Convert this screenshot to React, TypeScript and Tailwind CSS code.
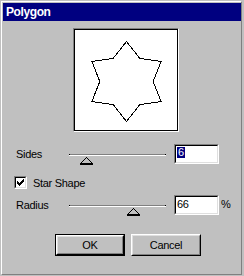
import React from "react";

function Thumb({ left }: { left: string }) {
  return (
    <svg
      className={`absolute top-[13px] ${left}`}
      width="13"
      height="8"
      viewBox="0 0 13 8"
      shapeRendering="crispEdges"
    >
      <path d="M6.5 0.5 L12.5 6.5 L0.5 6.5 Z" fill="#c0c0c0" stroke="#000" strokeWidth="1" />
      <line x1="0" y1="7" x2="13" y2="7" stroke="#000" strokeWidth="1" />
    </svg>
  );
}

function Slider({ thumbLeft }: { thumbLeft: string }) {
  return (
    <div className="relative w-[97px] h-[20px]">
      <div className="absolute left-0 right-0 top-[10px] h-[2px] border-t border-t-[#808080] border-b border-b-white" />
      <div className="absolute left-0 top-[10px] w-px h-px bg-black" />
      <div className="absolute right-0 top-[10px] w-px h-px bg-black" />
      <Thumb left={thumbLeft} />
    </div>
  );
}

function Edit({ children }: { children: React.ReactNode }) {
  return (
    <div className="w-[45px] h-[20px] border border-t-[#808080] border-l-[#808080] border-b-white border-r-white">
      <div className="w-full h-full bg-white border border-t-black border-l-black border-b-[#dfdfdf] border-r-[#dfdfdf]">
        {children}
      </div>
    </div>
  );
}

export default function App() {
  const R = 40;
  const r = 26.67;
  const cx = 51.5;
  const cy = 51.5;
  const pts: string[] = [];
  for (let k = 0; k < 6; k++) {
    const a = ((-90 + 60 * k) * Math.PI) / 180;
    const b = ((-60 + 60 * k) * Math.PI) / 180;
    pts.push(`${(cx + R * Math.cos(a)).toFixed(2)},${(cy + R * Math.sin(a)).toFixed(2)}`);
    pts.push(`${(cx + r * Math.cos(b)).toFixed(2)},${(cy + r * Math.sin(b)).toFixed(2)}`);
  }

  return (
    <div className="w-[244px] h-[276px] bg-[#c0c0c0] pt-px pl-px font-['Liberation_Sans',Arial,sans-serif] text-[11px] leading-[13px] text-black tracking-[-0.3px]">
      <div className="w-[241px] h-[274px] border border-t-white border-l-white border-r-[#808080] border-b-[#808080] pl-px pt-px flex flex-col">
        {/* Title bar */}
        <div className="h-[18px] bg-[#000080] pl-[3px] pt-[2px] text-white font-bold text-[12px] leading-[14px] tracking-[-0.4px]">
          Polygon
        </div>

        {/* Preview */}
        <div className="mt-[7px] ml-[70px] w-[106px] h-[104px] border border-t-[#808080] border-l-[#808080] border-b-white border-r-white">
          <div className="w-full h-full bg-white border border-black">
            <svg width="102" height="100" viewBox="0 0 102 100" shapeRendering="crispEdges">
              <polygon points={pts.join(" ")} fill="none" stroke="#000" strokeWidth="1" />
            </svg>
          </div>
        </div>

        {/* Sides */}
        <div className="mt-[12px] ml-[13px] flex h-[20px]">
          <div className="w-[53px] pt-[4px]">Sides</div>
          <Slider thumbLeft="left-[11px]" />
          <div className="ml-[8px]">
            <Edit>
              <span className="inline-block ml-px h-[11px] leading-[11px] px-px bg-[#000080] text-white">6</span>
            </Edit>
          </div>
        </div>

        {/* Star Shape */}
        <div className="mt-[12px] ml-[11px] flex h-[13px]">
          <div className="w-[13px] h-[13px] border border-t-[#808080] border-l-[#808080] border-b-white border-r-white">
            <div className="w-full h-full bg-white border border-t-black border-l-black border-b-[#dfdfdf] border-r-[#dfdfdf] relative">
              <svg className="absolute left-px top-px" width="7" height="7" viewBox="0 0 7 7" shapeRendering="crispEdges">
                <rect x="6" y="0" width="1" height="1" fill="#000" />
                <rect x="5" y="1" width="2" height="1" fill="#000" />
                <rect x="0" y="2" width="1" height="1" fill="#000" />
                <rect x="4" y="2" width="3" height="1" fill="#000" />
                <rect x="0" y="3" width="2" height="1" fill="#000" />
                <rect x="3" y="3" width="3" height="1" fill="#000" />
                <rect x="0" y="4" width="5" height="1" fill="#000" />
                <rect x="1" y="5" width="3" height="1" fill="#000" />
                <rect x="2" y="6" width="1" height="1" fill="#000" />
              </svg>
            </div>
          </div>
          <div className="ml-[6px] pt-px">Star Shape</div>
        </div>

        {/* Radius */}
        <div className="mt-[6px] ml-[13px] flex h-[20px]">
          <div className="w-[53px] pt-[4px]">Radius</div>
          <Slider thumbLeft="left-[58px]" />
          <div className="ml-[8px]">
            <Edit>
              <div className="pl-px pt-px">66</div>
            </Edit>
          </div>
          <div className="ml-[2px] pt-[3px]">%</div>
        </div>

        {/* Buttons */}
        <div className="mt-[19px] ml-[52px] flex">
          <div className="w-[70px] h-[22px] border border-black">
            <div className="w-full h-full border border-t-white border-l-white border-b-black border-r-black">
              <div className="w-full h-full border border-t-[#dfdfdf] border-l-[#dfdfdf] border-b-[#808080] border-r-[#808080] flex items-center justify-center">
                OK
              </div>
            </div>
          </div>
          <div className="ml-[6px] w-[70px] h-[22px] border border-t-white border-l-white border-b-black border-r-black">
            <div className="w-full h-full border border-t-[#dfdfdf] border-l-[#dfdfdf] border-b-[#808080] border-r-[#808080] flex items-center justify-center">
              Cancel
            </div>
          </div>
        </div>
      </div>
    </div>
  );
}
